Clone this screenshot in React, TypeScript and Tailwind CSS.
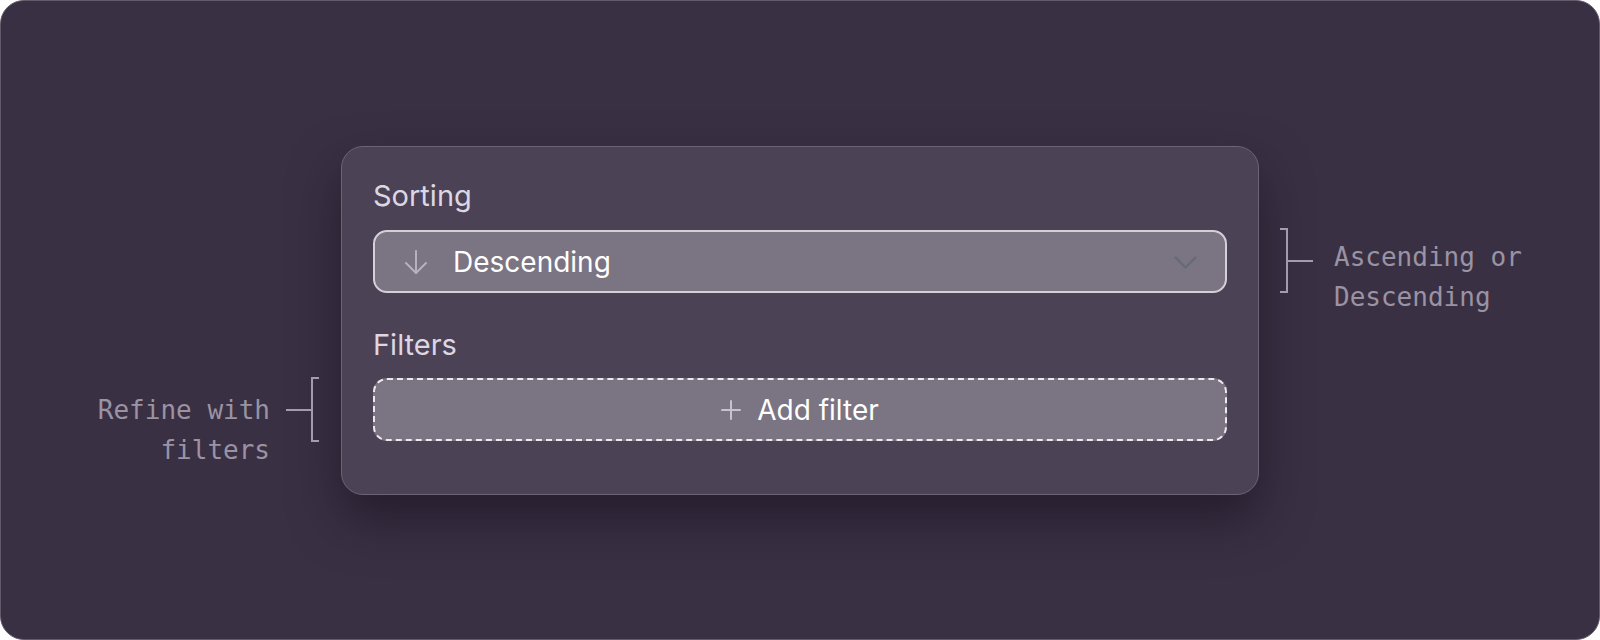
const mono = { fontFamily: '"DejaVu Sans Mono", "Liberation Mono", monospace' };

const ArrowDownIcon = () => (
  <svg width="22" height="24" viewBox="0 0 22 24" fill="none" stroke="#b7b1bd" strokeWidth="2" strokeLinecap="round" strokeLinejoin="round">
    <path d="M11 1v22" />
    <path d="M1 13l10 10 10-10" />
  </svg>
);

const ChevronIcon = () => (
  <svg width="23" height="13" viewBox="0 0 23 13" fill="none" stroke="#646b78" strokeWidth="2.4" strokeLinecap="round" strokeLinejoin="round">
    <path d="M1.5 1.5L11.5 11.5 21.5 1.5" />
  </svg>
);

const PlusIcon = () => (
  <svg width="20" height="20" viewBox="0 0 20 20" fill="none" stroke="#c7c2cc" strokeWidth="2" strokeLinecap="round">
    <path d="M10 1v18M1 10h18" />
  </svg>
);

const Bracket = ({ side }: { side: "left" | "right" }) => (
  <div className={`flex items-center ${side === "left" ? "flex-row" : "flex-row-reverse"}`}>
    <div className="h-[2px] w-[25px] bg-[#a39dab]" />
    <div
      className={`h-[65px] w-[8px] border-y-2 border-[#a39dab] ${
        side === "left" ? "border-l-2" : "border-r-2"
      }`}
    />
  </div>
);

export default function App() {
  return (
    <div
      className="w-[1600px] h-[640px] rounded-[24px] border border-[#625b6c] bg-[#3a3044] flex items-start justify-center overflow-hidden"
      style={{ fontFamily: 'Inter, "Noto Sans", sans-serif' }}
    >
      <div className="relative mt-[145px] w-[918px]">
        {/* left note */}
        <div className="absolute right-full top-[231px] mr-[22px] flex items-start gap-[16px]">
          <div className="mt-[13px] text-right text-[26px] leading-[40px] text-[#9a93a3] whitespace-nowrap" style={mono}>
            Refine with
            <br />
            filters
          </div>
          <Bracket side="left" />
        </div>

        {/* right note */}
        <div className="absolute left-full top-[82px] ml-[21px] flex items-start gap-[21px]">
          <Bracket side="right" />
          <div className="mt-[9px] text-[26px] leading-[40px] text-[#9a93a3] whitespace-nowrap" style={mono}>
            Ascending or
            <br />
            Descending
          </div>
        </div>

        <div className="rounded-[22px] border border-[#6c6476] bg-[#4b4255] px-[31px] pt-[31px] pb-[53px] shadow-[0_24px_50px_rgba(20,14,26,0.55)]">
          <div className="text-[29px] leading-[36px] text-[#dcd7e2]">Sorting</div>
          <div className="mt-[16px] flex h-[63px] items-center rounded-[14px] border-2 border-[#d4d0da] bg-[#7b7483] pl-[30px] pr-[28px]">
            <ArrowDownIcon />
            <span className="ml-[26px] text-[28px] text-white">Descending</span>
            <span className="ml-auto mt-[2px]">
              <ChevronIcon />
            </span>
          </div>

          <div className="mt-[34px] text-[29px] leading-[36px] text-[#dcd7e2]">Filters</div>
          <div className="mt-[15px] flex h-[63px] items-center justify-center gap-[16px] rounded-[14px] border-2 border-dashed border-[#ebe8ef] bg-[#7b7483]">
            <PlusIcon />
            <span className="text-[28px] text-white">Add filter</span>
          </div>
        </div>
      </div>
    </div>
  );
}
